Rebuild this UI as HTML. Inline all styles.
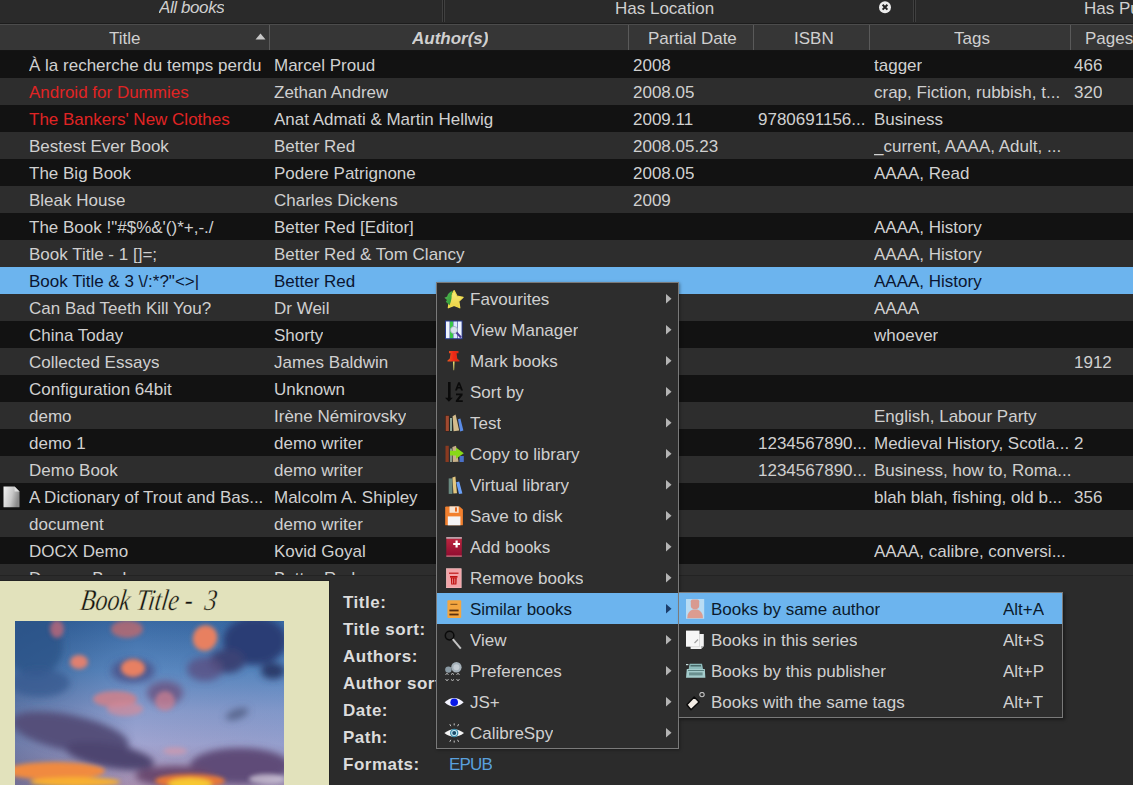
<!DOCTYPE html>
<html><head><meta charset="utf-8"><style>
*{margin:0;padding:0;box-sizing:border-box}
html,body{width:1133px;height:785px;overflow:hidden;background:#2b2b2b;font-family:"Liberation Sans",sans-serif;font-size:17px;color:#d0d0d0}
.a{position:absolute;white-space:nowrap}
.t{position:absolute;white-space:nowrap;overflow:hidden;line-height:20px}
#table{position:absolute;left:0;top:0;width:1133px;height:575px;overflow:hidden}
.row{position:absolute;left:0;width:1133px;height:27px}
.r0{background:#121212}.r1{background:#2d2d2d}
.sel{background:#6cb4ee;color:#111}
.red{color:#e02424}
.hdr{position:absolute;top:25px;height:25px;background:#363636}
.hs{position:absolute;top:25px;width:1px;height:25px;background:#5a5a5a}
.menu{position:absolute;background:#2d2d2d;border:1px solid #6a6a6a}
.mi{position:absolute;left:0;height:31px;width:100%}
.mi.hl{background:#6cb4ee;color:#0b1a2a}
.arr{position:absolute;width:0;height:0;border-top:4.5px solid transparent;border-bottom:4.5px solid transparent;border-left:5px solid #9a9a9a}
.hl .arr{border-left-color:#1a3a66}
.lbl{position:absolute;left:343px;font-weight:bold;white-space:nowrap;line-height:20px;letter-spacing:0.5px;color:#dcdcdc}
</style></head><body>

<div class="a" style="left:0;top:0;width:1133px;height:23px;background:#2a2a2a"></div>
<div class="a" style="left:0;top:23px;width:1133px;height:1px;background:#1c1c1c"></div>
<div class="a" style="left:0;top:24px;width:1133px;height:1px;background:#4c4c4c"></div>
<div class="t" style="left:159px;top:-2px;font-style:italic;letter-spacing:-0.4px">All books</div>
<div class="a" style="left:442px;top:0;width:3px;height:22px;background:linear-gradient(90deg,#404040 0,#404040 1px,#202020 1px,#202020 2px,#404040 2px)"></div>
<div class="t" style="left:615px;top:-1px">Has Location</div>
<div class="a" style="left:913px;top:0;width:3px;height:22px;background:linear-gradient(90deg,#404040 0,#404040 1px,#202020 1px,#202020 2px,#404040 2px)"></div>
<div class="t" style="left:1084px;top:-1px">Has Publisher</div>
<svg class="a" style="left:877px;top:0" width="16" height="16" viewBox="0 0 16 16"><circle cx="8" cy="7.2" r="6" fill="#ececec"/><path d="M5.6 4.8L10.4 9.6M10.4 4.8L5.6 9.6" stroke="#222" stroke-width="2"/></svg>
<div class="hdr" style="left:0;width:1133px"></div>
<div class="a" style="left:0;top:50px;width:1133px;height:1px;background:#141414"></div>
<div class="hs" style="left:269px"></div>
<div class="hs" style="left:628px"></div>
<div class="hs" style="left:753px"></div>
<div class="hs" style="left:869px"></div>
<div class="hs" style="left:1070px"></div>
<div class="t" style="left:109px;top:29px;">Title</div>
<div class="t" style="left:412px;top:29px;font-weight:bold;font-style:italic">Author(s)</div>
<div class="t" style="left:648px;top:29px;">Partial Date</div>
<div class="t" style="left:794px;top:29px;">ISBN</div>
<div class="t" style="left:954px;top:29px;">Tags</div>
<div class="t" style="left:1085px;top:29px;">Pages</div>
<svg class="a" style="left:255px;top:33px" width="11" height="7"><path d="M0.5 6.5L5.5 0.5L10.5 6.5Z" fill="#c8c8c8"/></svg>
<div id="table" style="top:0">
<div class="row r0" style="top:51px"></div>
<div class="t" style="left:29px;top:56px">À la recherche du temps perdu</div>
<div class="t" style="left:274px;top:56px">Marcel Proud</div>
<div class="t" style="left:633px;top:56px">2008</div>
<div class="t" style="left:874px;top:56px">tagger</div>
<div class="t" style="left:1074px;top:56px">466</div>
<div class="row r1" style="top:78px"></div>
<div class="t red" style="left:29px;top:83px">Android for Dummies</div>
<div class="t" style="left:274px;top:83px">Zethan Andrew</div>
<div class="t" style="left:633px;top:83px">2008.05</div>
<div class="t" style="left:874px;top:83px">crap, Fiction, rubbish, t...</div>
<div class="t" style="left:1074px;top:83px">320</div>
<div class="row r0" style="top:105px"></div>
<div class="t red" style="left:29px;top:110px">The Bankers' New Clothes</div>
<div class="t" style="left:274px;top:110px">Anat Admati &amp; Martin Hellwig</div>
<div class="t" style="left:633px;top:110px">2009.11</div>
<div class="t" style="left:758px;top:110px">9780691156...</div>
<div class="t" style="left:874px;top:110px">Business</div>
<div class="row r1" style="top:132px"></div>
<div class="t" style="left:29px;top:137px">Bestest Ever Book</div>
<div class="t" style="left:274px;top:137px">Better Red</div>
<div class="t" style="left:633px;top:137px">2008.05.23</div>
<div class="t" style="left:874px;top:137px">_current, AAAA, Adult, ...</div>
<div class="row r0" style="top:159px"></div>
<div class="t" style="left:29px;top:164px">The Big Book</div>
<div class="t" style="left:274px;top:164px">Podere Patrignone</div>
<div class="t" style="left:633px;top:164px">2008.05</div>
<div class="t" style="left:874px;top:164px">AAAA, Read</div>
<div class="row r1" style="top:186px"></div>
<div class="t" style="left:29px;top:191px">Bleak House</div>
<div class="t" style="left:274px;top:191px">Charles Dickens</div>
<div class="t" style="left:633px;top:191px">2009</div>
<div class="row r0" style="top:213px"></div>
<div class="t" style="left:29px;top:218px">The Book !"#$%&amp;'()*+,-./</div>
<div class="t" style="left:274px;top:218px">Better Red [Editor]</div>
<div class="t" style="left:874px;top:218px">AAAA, History</div>
<div class="row r1" style="top:240px"></div>
<div class="t" style="left:29px;top:245px">Book Title - 1 []=;</div>
<div class="t" style="left:274px;top:245px">Better Red &amp; Tom Clancy</div>
<div class="t" style="left:874px;top:245px">AAAA, History</div>
<div class="row sel" style="top:267px"></div>
<div class="t" style="left:29px;top:272px;color:#0b1530">Book Title &amp; 3 \/:*?"&lt;&gt;|</div>
<div class="t" style="left:274px;top:272px;color:#0b1530">Better Red</div>
<div class="t" style="left:874px;top:272px;color:#0b1530">AAAA, History</div>
<div class="row r1" style="top:294px"></div>
<div class="t" style="left:29px;top:299px">Can Bad Teeth Kill You?</div>
<div class="t" style="left:274px;top:299px">Dr Weil</div>
<div class="t" style="left:874px;top:299px">AAAA</div>
<div class="row r0" style="top:321px"></div>
<div class="t" style="left:29px;top:326px">China Today</div>
<div class="t" style="left:274px;top:326px">Shorty</div>
<div class="t" style="left:874px;top:326px">whoever</div>
<div class="row r1" style="top:348px"></div>
<div class="t" style="left:29px;top:353px">Collected Essays</div>
<div class="t" style="left:274px;top:353px">James Baldwin</div>
<div class="t" style="left:1074px;top:353px">1912</div>
<div class="row r0" style="top:375px"></div>
<div class="t" style="left:29px;top:380px">Configuration 64bit</div>
<div class="t" style="left:274px;top:380px">Unknown</div>
<div class="row r1" style="top:402px"></div>
<div class="t" style="left:29px;top:407px">demo</div>
<div class="t" style="left:274px;top:407px">Irène Némirovsky</div>
<div class="t" style="left:874px;top:407px">English, Labour Party</div>
<div class="row r0" style="top:429px"></div>
<div class="t" style="left:29px;top:434px">demo 1</div>
<div class="t" style="left:274px;top:434px">demo writer</div>
<div class="t" style="left:758px;top:434px">1234567890...</div>
<div class="t" style="left:874px;top:434px">Medieval History, Scotla...</div>
<div class="t" style="left:1074px;top:434px">2</div>
<div class="row r1" style="top:456px"></div>
<div class="t" style="left:29px;top:461px">Demo Book</div>
<div class="t" style="left:274px;top:461px">demo writer</div>
<div class="t" style="left:758px;top:461px">1234567890...</div>
<div class="t" style="left:874px;top:461px">Business, how to, Roma...</div>
<div class="row r0" style="top:483px"></div>
<div class="t" style="left:29px;top:488px">A Dictionary of Trout and Bas...</div>
<div class="t" style="left:274px;top:488px">Malcolm A. Shipley</div>
<div class="t" style="left:874px;top:488px">blah blah, fishing, old b...</div>
<div class="t" style="left:1074px;top:488px">356</div>
<svg class="a" style="left:3px;top:486px" width="17" height="22" viewBox="0 0 17 22"><defs><linearGradient id="dg" x1="0" x2="1" y1="0" y2="0.3"><stop offset="0" stop-color="#f4f4f4"/><stop offset="0.6" stop-color="#c8c8c8"/><stop offset="1" stop-color="#8a8a8a"/></linearGradient></defs><path d="M0.5 0.5H11.5L16.5 5.5V20.8Q16.5 21.3 16 21.3H1Q0.5 21.3 0.5 20.8Z" fill="url(#dg)"/><path d="M11.5 0.5V5.5H16.5" fill="#e0e0e0"/></svg>
<div class="row r1" style="top:510px"></div>
<div class="t" style="left:29px;top:515px">document</div>
<div class="t" style="left:274px;top:515px">demo writer</div>
<div class="row r0" style="top:537px"></div>
<div class="t" style="left:29px;top:542px">DOCX Demo</div>
<div class="t" style="left:274px;top:542px">Kovid Goyal</div>
<div class="t" style="left:874px;top:542px">AAAA, calibre, conversi...</div>
<div class="row r1" style="top:564px"></div>
<div class="t" style="left:29px;top:569px">Dummy Book</div>
<div class="t" style="left:274px;top:569px">Better Red</div>
</div>
<div class="a" style="left:0;top:575px;width:1133px;height:1px;background:#232323"></div>
<div class="a" style="left:0;top:580px;width:330px;height:1px;background:#232323"></div>
<div class="a" style="left:329px;top:580px;width:1px;height:205px;background:#232323"></div>
<div class="a" style="left:0;top:581px;width:329px;height:204px;background:#e2e2bc"></div>
<div class="a" style="left:79px;top:584px;font-family:'Liberation Serif',serif;font-style:italic;font-size:30px;color:#111;line-height:32px;transform:scaleX(0.8) skewX(-10deg);transform-origin:0 100%;letter-spacing:0px;-webkit-text-stroke:0.35px #e2e2bc">Book Title -&nbsp; 3</div>
<svg class="a" style="left:15px;top:621px" width="269" height="164" viewBox="0 0 269 164">
<defs>
<linearGradient id="sky" x1="0" y1="0" x2="0" y2="1">
<stop offset="0" stop-color="#3a6aa4"/>
<stop offset="0.3" stop-color="#5a88c0"/>
<stop offset="0.55" stop-color="#8a9ccc"/>
<stop offset="0.75" stop-color="#a0a4d0"/>
<stop offset="1" stop-color="#a890b0"/>
</linearGradient>
<linearGradient id="skyx" x1="0" y1="0" x2="1" y2="0">
<stop offset="0" stop-color="#103060" stop-opacity="0.35"/>
<stop offset="0.45" stop-color="#103060" stop-opacity="0"/>
<stop offset="1" stop-color="#3070b0" stop-opacity="0.1"/>
</linearGradient>
<filter id="bl" x="-50%" y="-50%" width="200%" height="200%"><feGaussianBlur stdDeviation="3.5"/></filter>
<filter id="bl2" x="-50%" y="-50%" width="200%" height="200%"><feGaussianBlur stdDeviation="2"/></filter>
</defs>
<rect width="269" height="164" fill="url(#sky)"/>
<rect width="269" height="164" fill="url(#skyx)"/>
<g filter="url(#bl)">
<ellipse cx="20" cy="25" rx="28" ry="30" fill="#2a5488" opacity="0.8"/>
<ellipse cx="25" cy="62" rx="30" ry="14" fill="#3a5a90" opacity="0.8"/>
<ellipse cx="240" cy="20" rx="32" ry="24" fill="#2a3c74"/>
<ellipse cx="212" cy="40" rx="18" ry="12" fill="#3a4274"/>
<ellipse cx="258" cy="50" rx="12" ry="8" fill="#2a3a6a"/>
<ellipse cx="190" cy="48" rx="18" ry="12" fill="#5a5082" opacity="0.8"/>
<ellipse cx="150" cy="72" rx="18" ry="12" fill="#6a5684" opacity="0.85"/>
<ellipse cx="118" cy="50" rx="22" ry="12" fill="#4a4a80" opacity="0.7"/>
<ellipse cx="55" cy="112" rx="60" ry="18" fill="#54507a" transform="rotate(12 55 112)"/>
<ellipse cx="95" cy="135" rx="45" ry="12" fill="#4e4470" transform="rotate(10 95 135)"/>
<ellipse cx="225" cy="145" rx="50" ry="18" fill="#5e4c78"/>
<ellipse cx="160" cy="155" rx="40" ry="10" fill="#6a4a70"/>
<ellipse cx="222" cy="93" rx="12" ry="5" fill="#5a6890" transform="rotate(-20 222 93)"/>
</g>
<g filter="url(#bl2)">
<ellipse cx="42" cy="8" rx="7" ry="9" fill="#c06878" opacity="0.8"/>
<ellipse cx="112" cy="8" rx="16" ry="9" fill="#c86868" opacity="0.75"/>
<ellipse cx="190" cy="17" rx="12" ry="13" fill="#e88060" transform="rotate(25 190 17)"/>
<ellipse cx="64" cy="41" rx="9" ry="7" fill="#e08070"/>
<ellipse cx="118" cy="47" rx="12" ry="9" fill="#e88062"/>
<ellipse cx="100" cy="78" rx="22" ry="8" fill="#d08088" opacity="0.85"/>
<ellipse cx="150" cy="80" rx="10" ry="10" fill="#d08090" opacity="0.7"/>
<ellipse cx="110" cy="88" rx="18" ry="7" fill="#d48a98" opacity="0.7"/>
<ellipse cx="160" cy="130" rx="12" ry="4" fill="#d898a8" opacity="0.6"/>
<ellipse cx="40" cy="150" rx="50" ry="9" fill="#f08a40"/>
<ellipse cx="60" cy="161" rx="45" ry="5" fill="#f8b030"/>
<ellipse cx="175" cy="160" rx="35" ry="7" fill="#e87838"/>
<ellipse cx="175" cy="163" rx="22" ry="6" fill="#f8c830"/>
<ellipse cx="252" cy="158" rx="18" ry="5" fill="#d8d0e0" opacity="0.7"/>
</g>
</svg>
<div class="lbl" style="top:593px">Title:</div>
<div class="lbl" style="top:620px">Title sort:</div>
<div class="lbl" style="top:647px">Authors:</div>
<div class="lbl" style="top:674px">Author sort:</div>
<div class="lbl" style="top:701px">Date:</div>
<div class="lbl" style="top:728px">Path:</div>
<div class="lbl" style="top:755px">Formats:</div>
<div class="lbl" style="top:782px">Identifiers:</div>
<div class="t" style="left:449px;top:755px;color:#5aa0dc;letter-spacing:-0.8px">EPUB</div>
<div class="a" style="left:436px;top:282px;width:243px;height:467px;background:#2d2d2d;border:1px solid #7a7a7a;box-shadow:1px 1px 3px rgba(0,0,0,0.35)"></div>
<div class="a" style="left:444px;top:289px"><svg width="20" height="20" viewBox="0 0 20 20"><defs><linearGradient id="stg" x1="0" y1="0" x2="0" y2="1"><stop offset="0" stop-color="#f6f080"/><stop offset="1" stop-color="#ecd040"/></linearGradient><linearGradient id="lfg" x1="0" y1="0" x2="1" y2="1"><stop offset="0" stop-color="#58c058"/><stop offset="1" stop-color="#2a9030"/></linearGradient></defs><path d="M10.1 1.6L13.1 7.2L19.1 8.3L14.8 12.4L15.8 18.8L10.1 16.4L4.3 18.8L5.3 12.4L3.4 8.6L7.1 7.2Z" fill="url(#stg)" stroke="#f0dc50" stroke-width="1.2" stroke-linejoin="round"/><path d="M8.8 1.8C5.8 2.6 3.6 5 3.2 7.4L0.4 8.8L3 11L1.8 12.8L5.6 16.2L7 12Q7.8 9 7.6 6.2Q8 3.6 8.8 1.8Z" fill="url(#lfg)"/></svg></div>
<div class="t" style="left:470px;top:290px;color:#d0d0d0">Favourites</div>
<svg class="a" style="left:666px;top:294px" width="6" height="10"><path d="M0 0L5.5 4.75L0 9.5Z" fill="#b4b4b4"/></svg>
<div class="a" style="left:444px;top:320px"><svg width="20" height="20" viewBox="0 0 20 20"><rect x="1" y="0.5" width="17.6" height="18.7" fill="#283a8a"/><rect x="2" y="1.5" width="3.6" height="16.7" fill="#eef4ff"/><rect x="6" y="1.5" width="3" height="16.7" fill="#38c848"/><rect x="9.4" y="1.5" width="3.6" height="16.7" fill="#dce8ff"/><rect x="13.6" y="1.5" width="4" height="16.7" fill="#eef4ff"/><circle cx="10" cy="10" r="3.6" fill="#d8e4ec" stroke="#98a8b8" stroke-width="0.8"/><path d="M12.5 12.5L17 17.5" stroke="#4a3a98" stroke-width="2"/></svg></div>
<div class="t" style="left:470px;top:321px;color:#d0d0d0">View Manager</div>
<svg class="a" style="left:666px;top:325px" width="6" height="10"><path d="M0 0L5.5 4.75L0 9.5Z" fill="#b4b4b4"/></svg>
<div class="a" style="left:444px;top:351px"><svg width="20" height="20" viewBox="0 0 20 20"><defs><linearGradient id="png" x1="0" y1="0" x2="1" y2="0"><stop offset="0" stop-color="#e85a20"/><stop offset="0.5" stop-color="#f02818"/><stop offset="1" stop-color="#d03010"/></linearGradient></defs><path d="M5 0H14.5V2.2H12.6L13.2 7.6L15.5 9.4V10.6H3.5V9.4L5.8 7.6L6.6 2.2H5Z" fill="url(#png)"/><path d="M9 10.6H10.6L10.1 19.3H9.5Z" fill="#e8e070"/></svg></div>
<div class="t" style="left:470px;top:352px;color:#d0d0d0">Mark books</div>
<svg class="a" style="left:666px;top:356px" width="6" height="10"><path d="M0 0L5.5 4.75L0 9.5Z" fill="#b4b4b4"/></svg>
<div class="a" style="left:444px;top:382px"><svg width="20" height="20" viewBox="0 0 20 20"><rect x="4" y="0" width="2.6" height="17" fill="#0a0a0a"/><path d="M1 15.8H8.8L4.9 19.8Z" fill="#0a0a0a"/><path d="M11 8.5L14.2 0.2H15.8L19 8.5H17L16.3 6.6H13.7L13 8.5ZM14.2 5H15.8L15 2.6Z" fill="#0a0a0a"/><path d="M12 11.6H18.6V13.2L14.6 18.3H18.8V20H11.8V18.4L15.8 13.3H12Z" fill="#0a0a0a"/></svg></div>
<div class="t" style="left:470px;top:383px;color:#d0d0d0">Sort by</div>
<svg class="a" style="left:666px;top:387px" width="6" height="10"><path d="M0 0L5.5 4.75L0 9.5Z" fill="#b4b4b4"/></svg>
<div class="a" style="left:444px;top:413px"><svg width="20" height="20" viewBox="0 0 20 20"><rect x="1.2" y="2.4" width="4.2" height="16" fill="#3a1a10"/><rect x="1.7" y="2.8" width="3.2" height="15.2" fill="#a04a30"/><rect x="5.6" y="4.6" width="2.8" height="13.8" fill="#1a2a20"/><rect x="6" y="5" width="2" height="13" fill="#90a898"/><path d="M8.6 3.2L11.6 1.6L15.2 17.6L9.6 18.2Z" fill="#d4bc8c"/><path d="M14 6.2L16.4 5.4L19.4 17.4L16.2 18.4Z" fill="#5a8ce8"/></svg></div>
<div class="t" style="left:470px;top:414px;color:#d0d0d0">Test</div>
<svg class="a" style="left:666px;top:418px" width="6" height="10"><path d="M0 0L5.5 4.75L0 9.5Z" fill="#b4b4b4"/></svg>
<div class="a" style="left:444px;top:444px"><svg width="20" height="20" viewBox="0 0 20 20"><rect x="1.5" y="1.8" width="3.3" height="16.2" fill="#8a3a20"/><rect x="6" y="4.5" width="2" height="13.5" fill="#8a9a8a"/><path d="M8.4 3L12 1.8L14.5 17.8L8.8 18Z" fill="#c8b088"/><path d="M15.5 12L19.8 12L19.8 18L15.5 18Z" fill="#4a70c8"/><path d="M6 6.8H12V3.6L19.8 9.2L12 14.8V11.6H6Z" fill="#88d818"/></svg></div>
<div class="t" style="left:470px;top:445px;color:#d0d0d0">Copy to library</div>
<svg class="a" style="left:666px;top:449px" width="6" height="10"><path d="M0 0L5.5 4.75L0 9.5Z" fill="#b4b4b4"/></svg>
<div class="a" style="left:444px;top:475px"><svg width="20" height="20" viewBox="0 0 20 20"><rect x="4.7" y="3.4" width="3.7" height="15.5" fill="#6a8a80"/><path d="M8.4 2.4L11.4 1.6L13 18.2L9.4 18.4Z" fill="#e4c880"/><path d="M12.2 7.2L15.2 6.6L18.4 18.4L15 19Z" fill="#6aa0f8"/></svg></div>
<div class="t" style="left:470px;top:476px;color:#d0d0d0">Virtual library</div>
<svg class="a" style="left:666px;top:480px" width="6" height="10"><path d="M0 0L5.5 4.75L0 9.5Z" fill="#b4b4b4"/></svg>
<div class="a" style="left:444px;top:506px"><svg width="20" height="20" viewBox="0 0 20 20"><path d="M1.2 1.2C1.2 0.6 1.6 0.4 2 0.4H15.6L18.9 3.6V18.4C18.9 19 18.5 19.3 18 19.3H2C1.5 19.3 1.2 19 1.2 18.4Z" fill="#f2802e"/><rect x="5.5" y="0.4" width="9.2" height="6.4" fill="#f6e4d4"/><rect x="11" y="1.4" width="2" height="4.2" fill="#e86a20"/><rect x="3.8" y="10.4" width="12.6" height="8.9" fill="#f4f4f6"/></svg></div>
<div class="t" style="left:470px;top:507px;color:#d0d0d0">Save to disk</div>
<svg class="a" style="left:666px;top:511px" width="6" height="10"><path d="M0 0L5.5 4.75L0 9.5Z" fill="#b4b4b4"/></svg>
<div class="a" style="left:444px;top:537px"><svg width="20" height="20" viewBox="0 0 20 20"><defs><linearGradient id="adg" x1="0" y1="0" x2="0" y2="1"><stop offset="0" stop-color="#c02840"/><stop offset="1" stop-color="#900c30"/></linearGradient></defs><rect x="2.3" y="0" width="15.5" height="19.5" fill="url(#adg)"/><rect x="2.3" y="0" width="15.5" height="1.8" fill="#b8a0a8"/><rect x="2.3" y="18.6" width="15.5" height="1" fill="#e09098"/><path d="M12.6 3.6V10.4M9.2 7H16" stroke="#fff" stroke-width="2.2"/></svg></div>
<div class="t" style="left:470px;top:538px;color:#d0d0d0">Add books</div>
<svg class="a" style="left:666px;top:542px" width="6" height="10"><path d="M0 0L5.5 4.75L0 9.5Z" fill="#b4b4b4"/></svg>
<div class="a" style="left:444px;top:568px"><svg width="20" height="20" viewBox="0 0 20 20"><rect x="2.3" y="0.7" width="14.9" height="19.3" fill="#f2a4a8"/><rect x="2.3" y="0.7" width="14.9" height="19.3" fill="none" stroke="#f8c8c8" stroke-width="0.6"/><rect x="5" y="4.6" width="9.5" height="1.2" fill="#c01818"/><rect x="6" y="8" width="7.5" height="1.6" fill="#c01010"/><path d="M6.8 9.6H12.8L12.4 16.4H7.2Z" fill="#c01010"/><path d="M8.6 10.4V15.6M10.8 10.4V15.6" stroke="#f2a4a8" stroke-width="0.8"/></svg></div>
<div class="t" style="left:470px;top:569px;color:#d0d0d0">Remove books</div>
<svg class="a" style="left:666px;top:573px" width="6" height="10"><path d="M0 0L5.5 4.75L0 9.5Z" fill="#b4b4b4"/></svg>
<div class="a" style="left:437px;top:593px;width:241px;height:31px;background:#6cb4ee"></div>
<div class="a" style="left:444px;top:599px"><svg width="20" height="20" viewBox="0 0 20 20"><rect x="3.4" y="1.2" width="13.8" height="17.8" rx="1" fill="#f4a640"/><rect x="6.4" y="4.8" width="7" height="1" fill="#7a4a18"/><rect x="5.4" y="10.6" width="9.2" height="1.8" fill="#5a3010"/><rect x="5.4" y="14.6" width="9.2" height="1.8" fill="#5a3010"/></svg></div>
<div class="t" style="left:470px;top:600px;color:#0b1a2c">Similar books</div>
<svg class="a" style="left:666px;top:604px" width="6" height="10"><path d="M0 0L5.5 4.75L0 9.5Z" fill="#1c3d6a"/></svg>
<div class="a" style="left:444px;top:630px"><svg width="20" height="20" viewBox="0 0 20 20"><circle cx="5.6" cy="5.6" r="4.3" fill="none" stroke="#0a0a0a" stroke-width="1.5"/><path d="M8.8 9.2L16.8 18.6" stroke="#c4c4c4" stroke-width="2"/></svg></div>
<div class="t" style="left:470px;top:631px;color:#d0d0d0">View</div>
<svg class="a" style="left:666px;top:635px" width="6" height="10"><path d="M0 0L5.5 4.75L0 9.5Z" fill="#b4b4b4"/></svg>
<div class="a" style="left:444px;top:661px"><svg width="20" height="20" viewBox="0 0 20 20"><circle cx="12.4" cy="6.2" r="5.2" fill="#a4b0b8"/><circle cx="12.4" cy="6.2" r="3" fill="#c4ccd2"/><circle cx="4.4" cy="8.6" r="3.2" fill="#8a9aa4"/><path d="M1.5 13.5L3 12.5L4.5 13.5M7 13.5L8.5 12.5L10 13.5M12.5 13.5L14 12.5L15.5 13.5M1.5 18.5L3 19.5L4.5 18.5M7 18.5L8.5 19.5L10 18.5M12.5 18.5L14 19.5L15.5 18.5" stroke="#c8c8c8" stroke-width="1" fill="none"/></svg></div>
<div class="t" style="left:470px;top:662px;color:#d0d0d0">Preferences</div>
<svg class="a" style="left:666px;top:666px" width="6" height="10"><path d="M0 0L5.5 4.75L0 9.5Z" fill="#b4b4b4"/></svg>
<div class="a" style="left:444px;top:692px"><svg width="20" height="20" viewBox="0 0 20 20"><path d="M0.6 10.2Q10 1.6 19.7 10.2Q10 18.8 0.6 10.2Z" fill="#f4f4ff"/><circle cx="10.2" cy="10.2" r="3.8" fill="#0818e8"/></svg></div>
<div class="t" style="left:470px;top:693px;color:#d0d0d0">JS+</div>
<svg class="a" style="left:666px;top:697px" width="6" height="10"><path d="M0 0L5.5 4.75L0 9.5Z" fill="#b4b4b4"/></svg>
<div class="a" style="left:444px;top:723px"><svg width="20" height="20" viewBox="0 0 20 20"><path d="M0.4 10Q10 2.4 20 10Q10 17.6 0.4 10Z" fill="#f4f4f4"/><circle cx="10.2" cy="10" r="4.2" fill="#3a8aa8"/><circle cx="10.2" cy="10" r="3" fill="#c8eef8"/><circle cx="10.2" cy="10" r="2" fill="#1a4a68"/><path d="M10.2 0.4V2.4M5.8 1.2L6.8 3.2M14.6 1.2L13.6 3.2M10.2 17.6V19.6M5.8 18.8L6.8 16.8M14.6 18.8L13.6 16.8" stroke="#c8c8c8" stroke-width="1"/></svg></div>
<div class="t" style="left:470px;top:724px;color:#d0d0d0">CalibreSpy</div>
<svg class="a" style="left:666px;top:728px" width="6" height="10"><path d="M0 0L5.5 4.75L0 9.5Z" fill="#b4b4b4"/></svg>
<div class="a" style="left:678px;top:592px;width:385px;height:126px;background:#2d2d2d;border:1px solid #7a7a7a;box-shadow:2px 2px 3px rgba(0,0,0,0.35)"></div>
<div class="a" style="left:679px;top:593px;width:383px;height:31px;background:#6cb4ee"></div>
<div class="a" style="left:686px;top:599px"><svg width="19" height="20" viewBox="0 0 19 20"><rect x="0" y="0" width="18.2" height="19.8" fill="#b8dcf4"/><path d="M4.8 2.2Q4.8 0.6 6.5 0.6H11.5Q13.2 0.6 13.2 2.2V7Q13.2 10 9 10.2Q4.8 10 4.8 7Z" fill="#d89a90"/><path d="M1.2 19.2Q1.2 12.6 6.8 10.6H11.4Q17 12.6 17 19.2Z" fill="#dc9c90"/></svg></div>
<div class="t" style="left:711px;top:600px;color:#0b1a2c">Books by same author</div>
<div class="t" style="left:1003px;top:600px;color:#0b1a2c">Alt+A</div>
<div class="a" style="left:686px;top:630px"><svg width="19" height="20" viewBox="0 0 19 20"><path d="M4.6 3.9H17.8V16L15 18.9H4.6Z" fill="#f2f2f2"/><path d="M0 0.6H13.5V16.7H0Z" fill="#f6f6f6"/><path d="M4.6 16.7H13.5V3.9" fill="none" stroke="#c8c8c8" stroke-width="0.6"/><path d="M15 18.9L15 16H17.8Z" fill="#b8b8b8"/><path d="M8.5 13L12 9.5" stroke="#a0a0a0" stroke-width="1.2"/></svg></div>
<div class="t" style="left:711px;top:631px;color:#d0d0d0">Books in this series</div>
<div class="t" style="left:1003px;top:631px;color:#d0d0d0">Alt+S</div>
<div class="a" style="left:686px;top:661px"><svg width="20" height="20" viewBox="0 0 20 20"><path d="M3.6 2.8H16L17 8H2.6Z" fill="#8cbaba"/><path d="M0.8 8H18.8L19.4 16.8H0Z" fill="#a4cccc"/><rect x="4.5" y="4.2" width="10.5" height="1.2" fill="#3a5858"/><rect x="2" y="9" width="16" height="1" fill="#5a8080"/><rect x="3" y="11.4" width="13.6" height="3" fill="#6a9090"/><rect x="0" y="3" width="2.4" height="1.2" fill="#c8e0e0"/></svg></div>
<div class="t" style="left:711px;top:662px;color:#d0d0d0">Books by this publisher</div>
<div class="t" style="left:1003px;top:662px;color:#d0d0d0">Alt+P</div>
<div class="a" style="left:686px;top:692px"><svg width="20" height="20" viewBox="0 0 20 20"><path d="M0.9 12.8L8.2 5L13.1 10L5 17.7Z" fill="#f2ebe4" stroke="#0a0a0a" stroke-width="1.4" stroke-linejoin="round"/><path d="M10.5 7.4L14 4" stroke="#2a2a2a" stroke-width="1"/><circle cx="16" cy="2.6" r="2.2" fill="none" stroke="#c0c0c0" stroke-width="1.1"/></svg></div>
<div class="t" style="left:711px;top:693px;color:#d0d0d0">Books with the same tags</div>
<div class="t" style="left:1003px;top:693px;color:#d0d0d0">Alt+T</div>
</body></html>
